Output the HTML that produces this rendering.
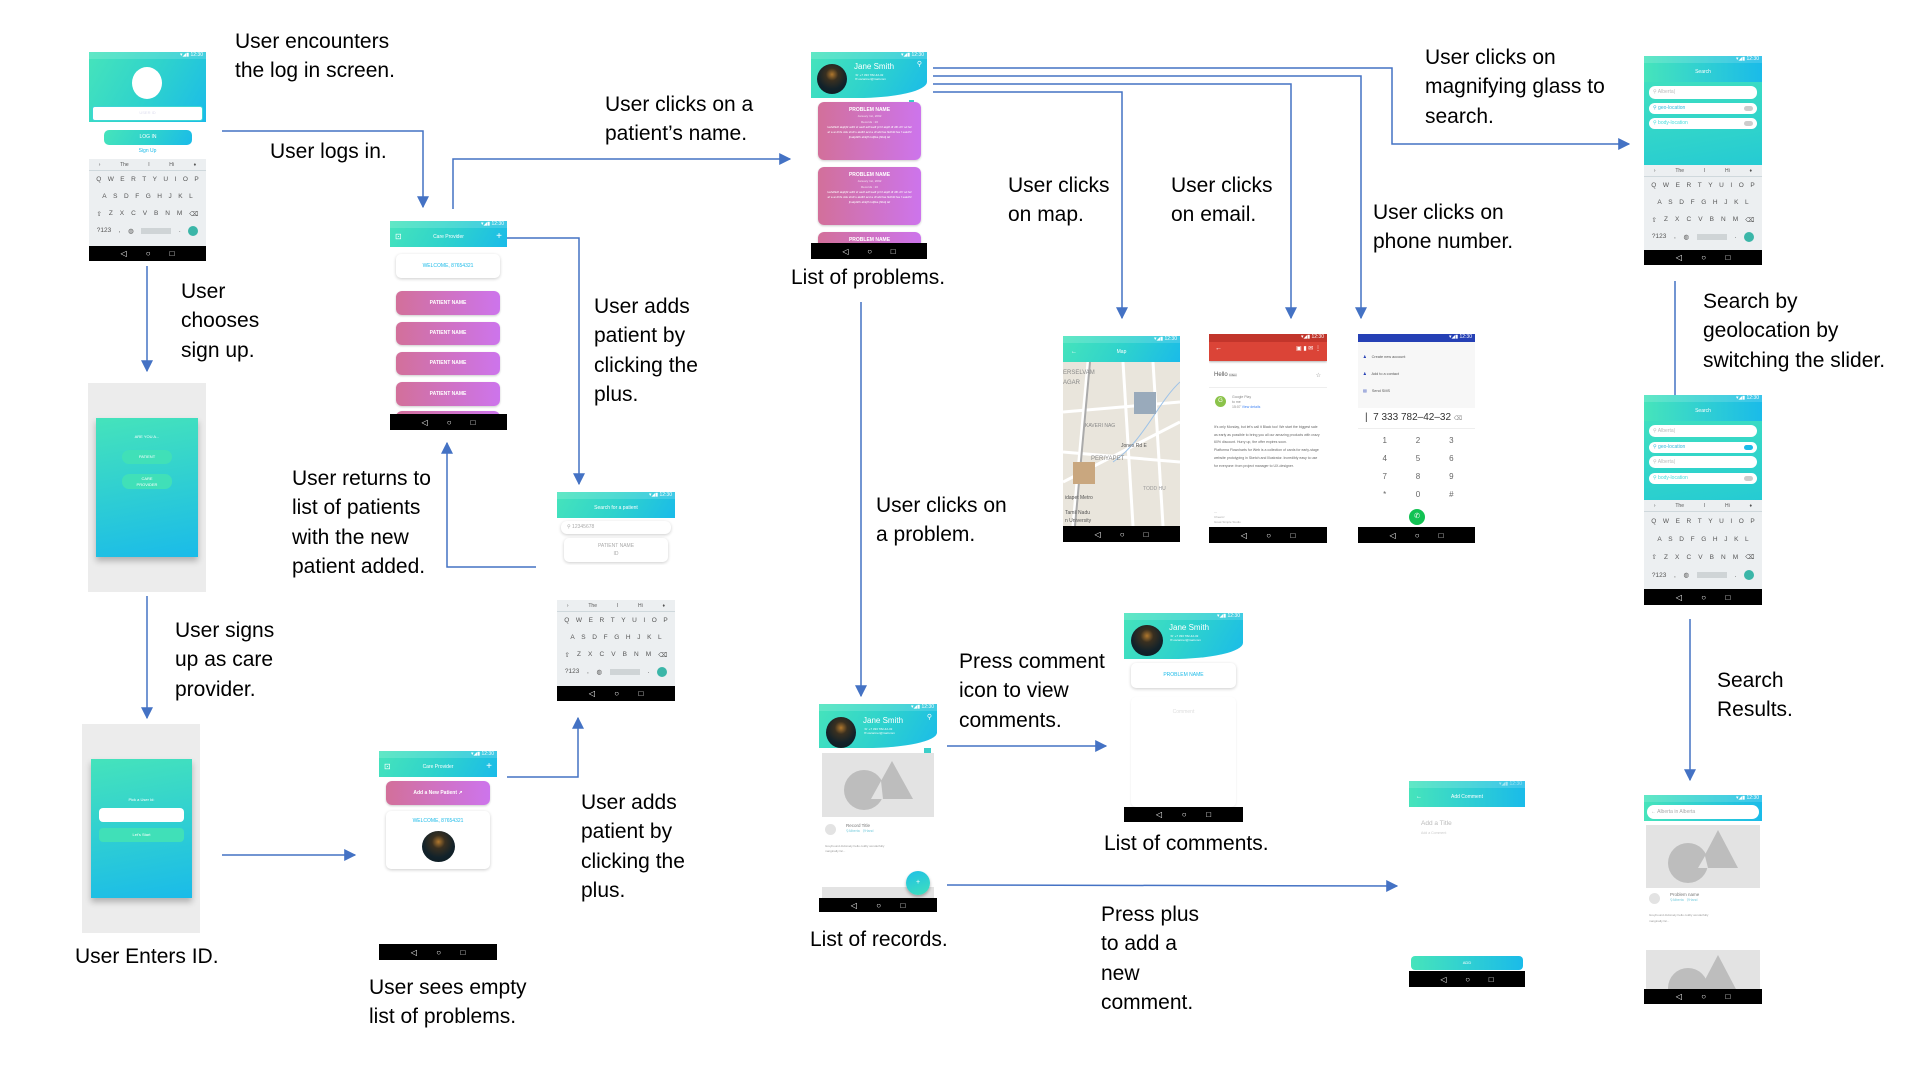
<!DOCTYPE html>
<html><head><meta charset="utf-8">
<style>
*{box-sizing:border-box;margin:0;padding:0}
body{width:1920px;height:1080px;background:#fff;position:relative;overflow:hidden;font-family:"Liberation Sans",sans-serif}
.t{position:absolute;font-size:21px;line-height:29.3px;color:#000;white-space:nowrap}
.ph{position:absolute;background:#fff;overflow:hidden}
.g{background:linear-gradient(120deg,#46e4bb 0%,#2fd3cc 50%,#1abbe9 100%)}
.ab{position:absolute}
.sb{position:absolute;top:0;left:0;right:0;height:7px;font-size:5px;color:#fff;text-align:right;padding-right:3px;line-height:7px;background:rgba(255,255,255,.15)}
.nav{position:absolute;left:0;right:0;bottom:0;height:16px;background:#000;color:#fff;font-size:8px;display:flex;justify-content:space-around;align-items:center;padding:0 22px}
.pink{position:absolute;background:linear-gradient(90deg,#d2709a,#cd74ec);border-radius:6px;color:#fff;font-size:5px;font-weight:bold;text-align:center;box-shadow:0 1px 2px rgba(0,0,0,.2)}
.card{position:absolute;background:#fff;border-radius:5px;box-shadow:0 1px 3px rgba(0,0,0,.2);text-align:center;font-size:5px}
.kb{position:absolute;left:0;right:0;background:#eceff1;color:#555;font-size:6.5px}
.kb .sug{height:12px;display:flex;justify-content:space-around;align-items:center;border-bottom:1px solid #cfd8dc;font-size:5px}
.kb .r{display:flex;justify-content:space-around;align-items:center;padding:0 4px}
.kb .r2{padding:0 10px}
.av{position:absolute;border-radius:50%;background:radial-gradient(circle at 50% 35%,#b0782e 0%,#3a3020 25%,#12222a 60%,#0c1a20 100%)}
.hdr{position:absolute;left:0;right:0;top:0;color:#fff}
.pill{position:absolute;background:#fff;border-radius:6px;font-size:5px;color:#9fe;padding-left:4px}
.sp{display:inline-block;width:30px;height:6px;background:#cfd4d6}
.en{display:inline-block;width:10px;height:10px;border-radius:50%;background:#3bb6a8}
</style></head><body>

<svg class="ab" style="left:0;top:0" width="1920" height="1080">
<defs>
<marker id="a" viewBox="0 0 10 10" refX="9" refY="5" markerWidth="12" markerHeight="12" orient="auto" markerUnits="userSpaceOnUse"><path d="M0,0 L10,5 L0,10 z" fill="#4472C4"/></marker></defs>
<g fill="none" stroke="#4472C4" stroke-width="1.5">
<polyline points="222,131 423,131 423,207" marker-end="url(#a)"/>
<polyline points="453,209 453,159 790,159" marker-end="url(#a)"/>
<polyline points="507,238 579,238 579,484" marker-end="url(#a)"/>
<polyline points="147,266 147,371" marker-end="url(#a)"/>
<polyline points="147,596 147,718" marker-end="url(#a)"/>
<polyline points="222,855 355,855" marker-end="url(#a)"/>
<polyline points="507,777 578,777 578,718" marker-end="url(#a)"/>
<polyline points="536,567 447,567 447,443" marker-end="url(#a)"/>
<polyline points="861,302 861,696" marker-end="url(#a)"/>
<polyline points="933,68 1392,68 1392,144 1629,144" marker-end="url(#a)"/>
<polyline points="933,76 1361,76 1361,318" marker-end="url(#a)"/>
<polyline points="933,84 1291,84 1291,318" marker-end="url(#a)"/>
<polyline points="933,92 1122,92 1122,318" marker-end="url(#a)"/>
<polyline points="1675,281 1675,416" marker-end="url(#a)"/>
<polyline points="1690,619 1690,780" marker-end="url(#a)"/>
<polyline points="947,746 1106,746" marker-end="url(#a)"/>
<polyline points="947,885 1397,886" marker-end="url(#a)"/>
</g></svg>

<div class="t" style="left:235px;top:27px">User encounters<br>the log in screen.</div>
<div class="t" style="left:270px;top:137px">User logs in.</div>
<div class="t" style="left:605px;top:90px">User clicks on a<br>patient’s name.</div>
<div class="t" style="left:181px;top:277px">User<br>chooses<br>sign up.</div>
<div class="t" style="left:594px;top:292px">User adds<br>patient by<br>clicking the<br>plus.</div>
<div class="t" style="left:292px;top:464px">User returns to<br>list of patients<br>with the new<br>patient added.</div>
<div class="t" style="left:175px;top:616px">User signs<br>up as care<br>provider.</div>
<div class="t" style="left:75px;top:942px">User Enters ID.</div>
<div class="t" style="left:581px;top:788px">User adds<br>patient by<br>clicking the<br>plus.</div>
<div class="t" style="left:369px;top:973px">User sees empty<br>list of problems.</div>
<div class="t" style="left:791px;top:263px">List of problems.</div>
<div class="t" style="left:1008px;top:171px">User clicks<br>on map.</div>
<div class="t" style="left:1171px;top:171px">User clicks<br>on email.</div>
<div class="t" style="left:1373px;top:198px">User clicks on<br>phone number.</div>
<div class="t" style="left:1425px;top:43px">User clicks on<br>magnifying glass to<br>search.</div>
<div class="t" style="left:1703px;top:287px">Search by<br>geolocation by<br>switching the slider.</div>
<div class="t" style="left:876px;top:491px">User clicks on<br>a problem.</div>
<div class="t" style="left:959px;top:647px">Press comment<br>icon to view<br>comments.</div>
<div class="t" style="left:1104px;top:829px">List of comments.</div>
<div class="t" style="left:810px;top:925px">List of records.</div>
<div class="t" style="left:1101px;top:900px">Press plus<br>to add a<br>new<br>comment.</div>
<div class="t" style="left:1717px;top:666px">Search<br>Results.</div>

<!-- A login -->
<div class="ph" style="left:89px;top:52px;width:117px;height:209px">
 <div class="g ab" style="left:0;top:0;width:117px;height:70px"></div>
 <div class="sb">▾◢▮ 12:30</div>
 <div class="ab" style="left:43px;top:15px;width:30px;height:32px;border-radius:50%;background:#fff"></div>
 <div class="ab" style="left:3px;top:54px;width:111px;height:15px;background:#fff;border:1.5px solid #3fd6d6;border-radius:3px;font-size:4px;color:#dde;text-align:center;line-height:12px">USER ID</div>
 <div class="g ab" style="left:15px;top:78px;width:88px;height:15px;border-radius:5px;font-size:5px;color:#fff;text-align:center;line-height:15px">LOG IN</div>
 <div class="ab" style="left:0;width:117px;top:96px;font-size:5px;color:#1cbbe9;text-align:center">Sign Up</div>
 <div class="kb" style="top:107px;height:87px">
  <div class="sug"><span>›</span><span>The</span><span>I</span><span>Hi</span><span>♦</span></div>
  <div class="r" style="height:17px"><span>Q</span><span>W</span><span>E</span><span>R</span><span>T</span><span>Y</span><span>U</span><span>I</span><span>O</span><span>P</span></div>
  <div class="r r2" style="height:17px"><span>A</span><span>S</span><span>D</span><span>F</span><span>G</span><span>H</span><span>J</span><span>K</span><span>L</span></div>
  <div class="r" style="height:17px"><span>⇧</span><span>Z</span><span>X</span><span>C</span><span>V</span><span>B</span><span>N</span><span>M</span><span>⌫</span></div>
  <div class="r" style="height:17px"><span>?123</span><span>,</span><span>◍</span><span class="sp"></span><span>.</span><span class="en"></span></div>
 </div>
 <div class="nav" style="height:15px"><span>◁</span><span>○</span><span>□</span></div>
</div>

<!-- B signup -->
<div class="ab" style="left:88px;top:383px;width:118px;height:209px;background:#ececec"></div>
<div class="ab" style="left:96px;top:418px;width:102px;height:139px;background:linear-gradient(170deg,#45e3bb,#1abbe9);box-shadow:0 4px 6px rgba(0,0,0,.25);color:#fff;font-size:4px;text-align:center">
 <div style="margin-top:16px">ARE YOU A...</div>
 <div style="margin:11px auto 0;width:50px;height:14px;border-radius:7px;background:#40e0b8;line-height:14px">PATIENT</div>
 <div style="margin:10px auto 0;width:50px;height:15px;border-radius:7px;background:#40e0b8;line-height:6px;padding-top:2px">CARE<br>PROVIDER</div>
</div>

<!-- C enter id -->
<div class="ab" style="left:82px;top:724px;width:118px;height:209px;background:#ececec"></div>
<div class="ab" style="left:91px;top:759px;width:101px;height:139px;background:linear-gradient(170deg,#45e3bb,#1abbe9);box-shadow:0 4px 6px rgba(0,0,0,.25);color:#fff;font-size:4px;text-align:center">
 <div style="margin-top:38px">Pick a User Id:</div>
 <div style="margin:6px auto 0;width:85px;height:14px;border-radius:4px;background:#fff"></div>
 <div style="margin:6px auto 0;width:85px;height:14px;border-radius:4px;background:#40e0b8;line-height:14px">Let's Start</div>
</div>

<!-- D care provider -->
<div class="ph" style="left:390px;top:221px;width:117px;height:209px">
 <div class="g hdr" style="height:26px;font-size:5px;text-align:center;line-height:32px">Care Provider<span class="ab" style="left:5px;top:0;font-size:8px">⊡</span><span class="ab" style="right:5px;top:0;font-size:10px">+</span></div>
 <div class="sb">▾◢▮ 12:30</div>
 <div class="card" style="left:6px;top:33px;width:104px;height:24px;line-height:24px;color:#1cbbe9">WELCOME, 87654321</div>
 <div class="pink" style="left:6px;top:70px;width:104px;height:24px;line-height:24px">PATIENT NAME</div>
 <div class="pink" style="left:6px;top:101px;width:104px;height:23px;line-height:23px">PATIENT NAME</div>
 <div class="pink" style="left:6px;top:131px;width:104px;height:23px;line-height:23px">PATIENT NAME</div>
 <div class="pink" style="left:6px;top:161px;width:104px;height:24px;line-height:24px">PATIENT NAME</div>
 <div class="pink" style="left:6px;top:190px;width:104px;height:24px"></div>
 <div class="nav"><span>◁</span><span>○</span><span>□</span></div>
</div>

<!-- E search patient -->
<div class="ph" style="left:557px;top:492px;width:118px;height:73px">
 <div class="g hdr" style="height:26px;font-size:5px;text-align:center;line-height:32px">Search for a patient</div>
 <div class="sb">▾◢▮ 12:30</div>
 <div class="card" style="left:4px;top:29px;width:110px;height:13px;border-radius:6px;text-align:left;padding-left:6px;line-height:13px;color:#aaa">⚲ 12345678</div>
 <div class="card" style="left:7px;top:46px;width:104px;height:24px;color:#aaa;line-height:8px;padding-top:4px">PATIENT NAME<br>ID</div>
</div>
<div class="ph" style="left:557px;top:600px;width:118px;height:101px">
 <div class="kb" style="top:0;height:86px">
  <div class="sug"><span>›</span><span>The</span><span>I</span><span>Hi</span><span>♦</span></div>
  <div class="r" style="height:17px"><span>Q</span><span>W</span><span>E</span><span>R</span><span>T</span><span>Y</span><span>U</span><span>I</span><span>O</span><span>P</span></div>
  <div class="r r2" style="height:17px"><span>A</span><span>S</span><span>D</span><span>F</span><span>G</span><span>H</span><span>J</span><span>K</span><span>L</span></div>
  <div class="r" style="height:17px"><span>⇧</span><span>Z</span><span>X</span><span>C</span><span>V</span><span>B</span><span>N</span><span>M</span><span>⌫</span></div>
  <div class="r" style="height:17px"><span>?123</span><span>,</span><span>◍</span><span class="sp"></span><span>.</span><span class="en"></span></div>
 </div>
 <div class="nav" style="height:15px"><span>◁</span><span>○</span><span>□</span></div>
</div>

<!-- F empty problems -->
<div class="ph" style="left:379px;top:751px;width:118px;height:122px">
 <div class="g hdr" style="height:26px;font-size:5px;text-align:center;line-height:32px">Care Provider<span class="ab" style="left:5px;top:0;font-size:8px">⊡</span><span class="ab" style="right:5px;top:0;font-size:10px">+</span></div>
 <div class="sb">▾◢▮ 12:30</div>
 <div class="pink" style="left:7px;top:30px;width:104px;height:24px;line-height:24px">Add a New Patient ↗</div>
 <div class="card" style="left:7px;top:60px;width:104px;height:58px;color:#1cbbe9;padding-top:7px">WELCOME, 87654321</div>
 <div class="av" style="left:43px;top:80px;width:33px;height:31px"></div>
</div>
<div class="ph" style="left:379px;top:944px;width:118px;height:16px"><div class="nav"><span>◁</span><span>○</span><span>□</span></div></div>

<!-- G problems -->
<div class="ph" style="left:811px;top:52px;width:116px;height:207px">
 <div class="g hdr" style="height:46px;border-radius:0 0 60% 0 / 0 0 35% 0"></div>
 <div class="sb">▾◢▮ 12:30</div>
 <div class="av" style="left:6px;top:12px;width:30px;height:30px"></div>
 <div class="ab" style="left:43px;top:10px;color:#fff;font-size:8px">Jane Smith</div>
 <div class="ab" style="left:44px;top:21px;color:#fff;font-size:3px;line-height:4px">☏ +7 333 782-42-32<br>✉ oscarmer@mail.com</div>
 <div class="ab" style="right:5px;top:8px;color:#fff;font-size:7px">⚲</div>
 <div class="ab" style="left:98px;top:48px;width:5px;height:6px;background:#3ccfc9"></div>
 <div class="pink" style="left:7px;top:50px;width:103px;height:58px;font-size:5px;padding-top:5px;line-height:6px">PROBLEM NAME<br><span style="font-weight:normal;font-size:3px;opacity:.8">January 1st, 2092<br>Records : 20</span><br><span style="font-weight:normal;font-size:3px;display:block;padding:0 8px;line-height:5px">kahdfkdf akjdjbf adhf sf asdf adf kadf jd hf akjdf df dfh df f sd faf af a ai dhfs dds shdf s akdhf acd a df afd fas fkdhfd fas f sakdhf jhakjdkfh ahkjfh kdjfka jhfkdj laf</span></div>
 <div class="pink" style="left:7px;top:115px;width:103px;height:58px;font-size:5px;padding-top:5px;line-height:6px">PROBLEM NAME<br><span style="font-weight:normal;font-size:3px;opacity:.8">January 1st, 2092<br>Records : 20</span><br><span style="font-weight:normal;font-size:3px;display:block;padding:0 8px;line-height:5px">kahdfkdf akjdjbf adhf sf asdf adf kadf jd hf akjdf df dfh df f sd faf af a ai dhfs dds shdf s akdhf acd a df afd fas fkdhfd fas f sakdhf jhakjdkfh ahkjfh kdjfka jhfkdj laf</span></div>
 <div class="pink" style="left:7px;top:180px;width:103px;height:30px;padding-top:5px">PROBLEM NAME</div>
 <div class="nav" style="height:16px"><span>◁</span><span>○</span><span>□</span></div>
</div>

<!-- H records -->
<div class="ph" style="left:819px;top:704px;width:118px;height:208px">
 <div class="g hdr" style="height:44px;border-radius:0 0 60% 0 / 0 0 35% 0"></div>
 <div class="sb">▾◢▮ 12:30</div>
 <div class="av" style="left:7px;top:13px;width:30px;height:31px"></div>
 <div class="ab" style="left:44px;top:12px;color:#fff;font-size:8px">Jane Smith</div>
 <div class="ab" style="left:45px;top:23px;color:#fff;font-size:3px;line-height:4px">☏ +7 333 782-42-32<br>✉ oscarmer@mail.com</div>
 <div class="ab" style="right:5px;top:9px;color:#fff;font-size:7px">⚲</div>
 <div class="ab" style="left:105px;top:44px;width:7px;height:6px;background:#3ccfc9"></div>
 <svg class="ab" style="left:3px;top:49px" width="112" height="64"><rect width="112" height="64" fill="#e3e3e3"/><circle cx="42" cy="37" r="20" fill="#bdbdbd"/><polygon points="70,8 91,46 49,46" fill="#bdbdbd"/><polygon points="59,28 61,46 49,46" fill="#e3e3e3"/></svg>
 <div class="ab" style="left:6px;top:120px;width:11px;height:11px;border-radius:50%;background:#e3e3e3"></div>
 <div class="ab" style="left:27px;top:119px;font-size:4.5px;color:#777;line-height:5px">Record Title<br><span style="color:#7cd;font-size:3.5px">⚲Alberta &nbsp; ⚲Hand</span></div>
 <div class="ab" style="left:6px;top:140px;font-size:3px;color:#999;line-height:5px">Greyhound divisively hello coldly wonderfully<br>marginally far...</div>
 <div class="ab" style="left:3px;top:183px;width:112px;height:12px;background:#e3e3e3"></div>
 <div class="ab" style="left:87px;top:167px;width:24px;height:24px;border-radius:50%;background:linear-gradient(160deg,#1ec0e6,#40e0bc);box-shadow:0 2px 3px rgba(0,0,0,.3);color:#fff;font-size:7px;text-align:center;line-height:24px">+</div>
 <div class="nav" style="height:14px"><span>◁</span><span>○</span><span>□</span></div>
</div>

<!-- I comments -->
<div class="ph" style="left:1124px;top:613px;width:119px;height:209px">
 <div class="g hdr" style="height:46px;border-radius:0 0 60% 0 / 0 0 35% 0"></div>
 <div class="sb">▾◢▮ 12:30</div>
 <div class="av" style="left:7px;top:12px;width:32px;height:31px"></div>
 <div class="ab" style="left:45px;top:10px;color:#fff;font-size:8px">Jane Smith</div>
 <div class="ab" style="left:46px;top:21px;color:#fff;font-size:3px;line-height:4px">☏ +7 333 782-42-32<br>✉ oscarmer@mail.com</div>
 <div class="card" style="left:7px;top:50px;width:105px;height:25px;line-height:25px;color:#1cbbe9">PROBLEM NAME</div>
 <div class="card" style="left:7px;top:84px;width:105px;height:110px;box-shadow:0 1px 2px rgba(0,0,0,.08);color:#ddd;padding-top:12px">Comment</div>
 <div class="nav" style="height:15px"><span>◁</span><span>○</span><span>□</span></div>
</div>

<!-- J map -->
<div class="ph" style="left:1063px;top:336px;width:117px;height:206px">
 <div class="g hdr" style="height:26px;font-size:5px;text-align:center;line-height:32px">Map<span class="ab" style="left:8px;top:0;font-size:6px">←</span></div>
 <div class="sb">▾◢▮ 12:30</div>
 <svg class="ab" style="left:0;top:26px" width="117" height="164"><rect width="117" height="164" fill="#e9e5dc"/>
 <g stroke="#fff" stroke-width="3" fill="none"><path d="M25,0 L10,164"/><path d="M0,120 L117,60"/><path d="M60,0 L70,164"/><path d="M0,50 L117,40"/><path d="M0,90 L117,100"/><path d="M90,0 L100,164"/></g>
 <g stroke="#aaa" stroke-width="2" fill="none"><path d="M27,0 L12,164"/></g>
 <path d="M117,20 C95,40 80,80 50,100" stroke="#9ec3e8" stroke-width="1" fill="none"/>
 <rect x="71" y="30" width="22" height="22" fill="#9ab"/><rect x="10" y="100" width="22" height="22" fill="#c9a77f"/>
 <text x="0" y="12" font-size="6" fill="#888" font-family="Liberation Sans">ERSELVAM</text>
 <text x="0" y="22" font-size="6" fill="#888" font-family="Liberation Sans">AGAR</text>
 <text x="22" y="65" font-size="5" fill="#888" font-family="Liberation Sans">KAVERI NAG</text>
 <text x="58" y="85" font-size="5" fill="#555" font-family="Liberation Sans">Jones Rd E</text>
 <text x="28" y="98" font-size="6" fill="#888" font-family="Liberation Sans">PERIYAPET</text>
 <text x="2" y="137" font-size="5" fill="#555" font-family="Liberation Sans">idapet Metro</text>
 <text x="80" y="128" font-size="5" fill="#999" font-family="Liberation Sans">TODD HU</text>
 <text x="2" y="152" font-size="5" fill="#555" font-family="Liberation Sans">Tamil Nadu</text>
 <text x="2" y="160" font-size="5" fill="#555" font-family="Liberation Sans">n University</text>
 </svg>
 <div class="nav"><span>◁</span><span>○</span><span>□</span></div>
</div>

<!-- K email -->
<div class="ph" style="left:1209px;top:334px;width:118px;height:209px">
 <div class="hdr" style="height:27px;background:#db4437;box-shadow:0 1px 2px rgba(0,0,0,.3)"><div style="height:8px;background:#c2352b;font-size:5px;text-align:right;padding-right:3px">▾◢▮ 12:30</div><div style="font-size:7px;padding:3px 0 0 6px">← <span style="float:right;padding-right:6px;font-size:6px">▣ ▮ ✉ ⋮</span></div></div>
 <div class="ab" style="left:5px;top:38px;font-size:6px;color:#555">Hello <span style="background:#eee;font-size:3px">Inbox</span></div>
 <div class="ab" style="right:6px;top:38px;font-size:6px;color:#888">☆</div>
 <div class="ab" style="left:0;right:0;top:53px;height:1px;background:#eee"></div>
 <div class="ab" style="left:6px;top:62px;width:11px;height:11px;border-radius:50%;background:#8bc34a;color:#fff;font-size:6px;text-align:center;line-height:11px">G</div>
 <div class="ab" style="left:23px;top:61px;font-size:3.5px;color:#888;line-height:5px">Google Play<br>to me<br>15:07 <span style="color:#4285f4">View details</span></div>
 <div class="ab" style="left:5px;top:90px;width:108px;font-size:3.5px;color:#666;line-height:7.7px">It's only Monday, but let's call it Black too! We start the biggest sale as early as possible to bring you all our amazing products with crazy 60% discount. Hurry up, the offer expires soon.<br>Platforma Flowcharts for Web is a collection of cards for early-stage website prototyping in Sketch and Illustrator. Incredibly easy to use for everyone: from project manager to UX-designer.</div>
 <div class="ab" style="left:5px;top:176px;font-size:3px;color:#aaa;line-height:5px">—<br>Cheers!<br>Great Simple Studio</div>
 <div class="nav"><span>◁</span><span>○</span><span>□</span></div>
</div>

<!-- L phone -->
<div class="ph" style="left:1358px;top:334px;width:117px;height:209px">
 <div class="hdr" style="height:8px;background:#2540b5;font-size:5px;text-align:right;padding-right:3px">▾◢▮ 12:30</div>
 <div class="ab" style="left:0;top:8px;width:117px;height:66px;background:#f7f7f7"></div>
 <div class="ab" style="left:5px;top:15px;font-size:3.8px;color:#555;line-height:17px"><span style="color:#2540b5">♟</span> &nbsp; &nbsp; Create new account<br><span style="color:#2540b5">♟</span> &nbsp; &nbsp; Add to a contact<br><span style="color:#2540b5">▤</span> &nbsp; &nbsp; Send SMS</div>
 <div class="ab" style="left:7px;top:78px;font-size:10px;color:#333;white-space:nowrap">| &nbsp;7 333 782–42–32 <span style="font-size:6px;color:#888">⌫</span></div>
 <div class="ab" style="left:0;right:0;top:94px;height:1px;background:#eee"></div>
 <div class="ab" style="left:10px;top:98px;width:100px;display:grid;grid-template-columns:1fr 1fr 1fr;text-align:center;font-size:8px;color:#666;line-height:18px"><span>1</span><span>2</span><span>3</span><span>4</span><span>5</span><span>6</span><span>7</span><span>8</span><span>9</span><span>*</span><span>0</span><span>#</span></div>
 <div class="ab" style="left:51px;top:175px;width:16px;height:16px;border-radius:50%;background:#12c253;color:#fff;font-size:7px;text-align:center;line-height:16px">✆</div>
 <div class="nav"><span>◁</span><span>○</span><span>□</span></div>
</div>

<!-- M search 1 -->
<div class="ph" style="left:1644px;top:56px;width:118px;height:209px">
 <div class="ab" style="left:0;top:0;width:118px;height:109px;background:linear-gradient(170deg,#46e4bb,#25cbd3)"></div>
 <div class="hdr" style="height:26px;background:linear-gradient(90deg,#46e4bb,#1abbe9);font-size:5px;text-align:center;line-height:32px">Search</div>
 <div class="sb">▾◢▮ 12:30</div>
 <div class="pill" style="left:5px;top:30px;width:108px;height:13px;line-height:13px;color:#bbb">⚲ Alberta|</div>
 <div class="pill" style="left:5px;top:47px;width:108px;height:11px;line-height:11px;color:#3bd">⚲ geo-location<span style="float:right;margin:3px 4px 0 0;width:9px;height:5px;border-radius:3px;background:#ccc"></span></div>
 <div class="pill" style="left:5px;top:62px;width:108px;height:11px;line-height:11px;color:#4dd">⚲ body-location<span style="float:right;margin:3px 4px 0 0;width:9px;height:5px;border-radius:3px;background:#ccc"></span></div>
 <div class="kb" style="top:109px;height:85px">
  <div class="sug"><span>›</span><span>The</span><span>I</span><span>Hi</span><span>♦</span></div>
  <div class="r" style="height:17px"><span>Q</span><span>W</span><span>E</span><span>R</span><span>T</span><span>Y</span><span>U</span><span>I</span><span>O</span><span>P</span></div>
  <div class="r r2" style="height:17px"><span>A</span><span>S</span><span>D</span><span>F</span><span>G</span><span>H</span><span>J</span><span>K</span><span>L</span></div>
  <div class="r" style="height:17px"><span>⇧</span><span>Z</span><span>X</span><span>C</span><span>V</span><span>B</span><span>N</span><span>M</span><span>⌫</span></div>
  <div class="r" style="height:17px"><span>?123</span><span>,</span><span>◍</span><span class="sp"></span><span>.</span><span class="en"></span></div>
 </div>
 <div class="nav" style="height:15px"><span>◁</span><span>○</span><span>□</span></div>
</div>

<!-- N search 2 -->
<div class="ph" style="left:1644px;top:395px;width:118px;height:210px">
 <div class="ab" style="left:0;top:0;width:118px;height:105px;background:linear-gradient(170deg,#46e4bb,#25cbd3)"></div>
 <div class="hdr" style="height:26px;background:linear-gradient(90deg,#46e4bb,#1abbe9);font-size:5px;text-align:center;line-height:32px">Search</div>
 <div class="sb">▾◢▮ 12:30</div>
 <div class="pill" style="left:5px;top:30px;width:108px;height:12px;line-height:12px;color:#bbb">⚲ Alberta|</div>
 <div class="pill" style="left:5px;top:47px;width:108px;height:11px;line-height:11px;color:#3bd">⚲ geo-location<span style="float:right;margin:3px 4px 0 0;width:9px;height:5px;border-radius:3px;background:#1cbbe9"></span></div>
 <div class="pill" style="left:5px;top:61px;width:108px;height:12px;line-height:12px;color:#bbb">⚲ Alberta|</div>
 <div class="pill" style="left:5px;top:78px;width:108px;height:11px;line-height:11px;color:#4dd">⚲ body-location<span style="float:right;margin:3px 4px 0 0;width:9px;height:5px;border-radius:3px;background:#ccc"></span></div>
 <div class="kb" style="top:105px;height:89px">
  <div class="sug"><span>›</span><span>The</span><span>I</span><span>Hi</span><span>♦</span></div>
  <div class="r" style="height:18px"><span>Q</span><span>W</span><span>E</span><span>R</span><span>T</span><span>Y</span><span>U</span><span>I</span><span>O</span><span>P</span></div>
  <div class="r r2" style="height:18px"><span>A</span><span>S</span><span>D</span><span>F</span><span>G</span><span>H</span><span>J</span><span>K</span><span>L</span></div>
  <div class="r" style="height:18px"><span>⇧</span><span>Z</span><span>X</span><span>C</span><span>V</span><span>B</span><span>N</span><span>M</span><span>⌫</span></div>
  <div class="r" style="height:18px"><span>?123</span><span>,</span><span>◍</span><span class="sp"></span><span>.</span><span class="en"></span></div>
 </div>
 <div class="nav" style="height:16px"><span>◁</span><span>○</span><span>□</span></div>
</div>

<!-- O results -->
<div class="ph" style="left:1644px;top:795px;width:118px;height:209px">
 <div class="hdr" style="height:26px;background:linear-gradient(90deg,#46e4bb,#1abbe9)"></div>
 <div class="sb">▾◢▮ 12:30</div>
 <div class="pill" style="left:3px;top:10px;width:112px;height:14px;line-height:14px;color:#aaa;border-radius:7px">← Alberta in Alberta</div>
 <svg class="ab" style="left:2px;top:30px" width="114" height="63"><rect width="114" height="63" fill="#e3e3e3"/><circle cx="42" cy="38" r="20" fill="#bdbdbd"/><polygon points="72,5 92,43 52,43" fill="#bdbdbd"/><polygon points="59,31 62,43 52,43" fill="#e3e3e3"/></svg>
 <div class="ab" style="left:5px;top:98px;width:11px;height:11px;border-radius:50%;background:#e3e3e3"></div>
 <div class="ab" style="left:26px;top:97px;font-size:4.5px;color:#777;line-height:5px">Problem name<br><span style="color:#7cd;font-size:3.5px">⚲Alberta &nbsp; ⚲Hand</span></div>
 <div class="ab" style="left:5px;top:117px;font-size:3px;color:#999;line-height:6px">Greyhound divisively hello coldly wonderfully<br>marginally far...</div>
 <svg class="ab" style="left:2px;top:155px" width="114" height="40"><rect width="114" height="40" fill="#e3e3e3"/><circle cx="42" cy="38" r="20" fill="#bdbdbd"/><polygon points="72,5 92,43 52,43" fill="#bdbdbd"/></svg>
 <div class="nav" style="height:15px"><span>◁</span><span>○</span><span>□</span></div>
</div>

<!-- P add comment -->
<div class="ph" style="left:1409px;top:781px;width:116px;height:26px">
 <div class="hdr" style="height:26px;background:linear-gradient(90deg,#46e4bb,#1abbe9);font-size:5px;text-align:center;line-height:32px">Add Comment<span class="ab" style="left:7px;top:0;font-size:6px">←</span></div>
 <div class="sb" style="color:rgba(255,255,255,.5)">▾◢▮ 12:30</div>
</div>
<div class="ab" style="left:1421px;top:820px;font-size:6.5px;color:#bbb">Add a Title</div>
<div class="ab" style="left:1421px;top:831px;font-size:3.5px;color:#ccc">Add a Comment</div>
<div class="ab" style="left:1411px;top:956px;width:112px;height:14px;border-radius:4px;background:linear-gradient(90deg,#46e4bb,#1abbe9);color:#fff;font-size:4px;text-align:center;line-height:14px">ADD</div>
<div class="ph" style="left:1409px;top:971px;width:116px;height:16px"><div class="nav"><span>◁</span><span>○</span><span>□</span></div></div>

</body></html>
